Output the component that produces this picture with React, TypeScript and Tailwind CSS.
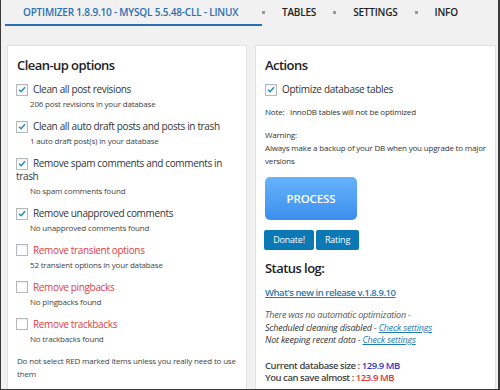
import React from "react";

function Check({ checked }: { checked: boolean }) {
  return (
    <span className="inline-flex w-3 h-3 align-[-2px] bg-white border border-[#b4b9be] shadow-[inset_0_1px_2px_rgba(0,0,0,0.08)] items-center justify-center">
      {checked && (
        <svg viewBox="0 0 12 12" className="w-[11px] h-[11px]">
          <path d="M2.4 6.2 L4.9 8.6 L9.6 3.2" fill="none" stroke="#1e8cbe" strokeWidth="1.8" />
        </svg>
      )}
    </span>
  );
}

type Opt = { label: string; sub: string; checked: boolean; red?: boolean };

const options: Opt[] = [
  { label: "Clean all post revisions", sub: "206 post revisions in your database", checked: true },
  { label: "Clean all auto draft posts and posts in trash", sub: "1 auto draft post(s) in your database", checked: true },
  { label: "Remove spam comments and comments in trash", sub: "No spam comments found", checked: true },
  { label: "Remove unapproved comments", sub: "No unapproved comments found", checked: true },
  { label: "Remove transient options", sub: "52 transient options in your database", checked: false, red: true },
  { label: "Remove pingbacks", sub: "No pingbacks found", checked: false, red: true },
  { label: "Remove trackbacks", sub: "No trackbacks found", checked: false, red: true },
];

export default function App() {
  return (
    <div
      className="w-[500px] h-[390px] overflow-hidden bg-[#f1f1f1] border-l border-b border-r-2 border-[#3a3a3a] text-[#333]"
      style={{ fontFamily: '"Open Sans", Arial, sans-serif' }}
    >
      {/* Tabs */}
      <div className="flex items-center pl-[4px] h-[26px] text-[10px] font-semibold tracking-[-0.2px]">
        <div className="w-[257px] h-full border-b-2 border-[#2a6fb5] pl-[18px] flex items-center text-[#2a6fb5] whitespace-nowrap">
          OPTIMIZER 1.8.9.10 - MYSQL 5.5.48-CLL - LINUX
        </div>
        {["TABLES", "SETTINGS", "INFO"].map((t) => (
          <div key={t} className="h-full pb-[2px] flex items-center text-[#222]">
            <span className="w-[3px] h-[3px] bg-[#9a9a9a] mr-[17px]" />
            <span className="mr-[17px]">{t}</span>
          </div>
        ))}
      </div>

      <div className="flex gap-[8px] pl-[6px] mt-[19px]">
        {/* Left panel */}
        <div className="w-[240px] h-[360px] shrink-0 bg-white border border-[#e2e2e2] pl-[9px] pr-[6px] pt-[9px]">
          <h2 className="text-[13px] font-semibold leading-[20px] tracking-[-0.55px] text-[#222]">Clean-up options</h2>
          <div className="mt-[8px] flex flex-col gap-[10px]">
            {options.map((o) => (
              <div key={o.label}>
                <div
                  className={`-ml-px text-[10px] leading-[13px] tracking-[-0.35px] ${o.red ? "text-[#e23d3d]" : "text-[#333]"}`}
                >
                  <Check checked={o.checked} />
                  <span className="ml-[5px]">{o.label}</span>
                </div>
                <div className="text-[8px] leading-[12px] tracking-[-0.18px] mt-[2px] pl-[13px] text-[#444]">{o.sub}</div>
              </div>
            ))}
          </div>
          <p className="text-[8px] leading-[12.5px] tracking-[-0.18px] mt-[10px] text-[#444]">
            Do not select RED marked items unless you really need to use them
          </p>
        </div>

        {/* Right panel */}
        <div className="w-[241px] h-[360px] shrink-0 bg-white border border-[#e2e2e2] pl-[9px] pr-[6px] pt-[9px]">
          <h2 className="text-[13px] font-semibold leading-[20px] tracking-[-0.55px] text-[#222]">Actions</h2>
          <div className="mt-[8px] text-[10px] leading-[13px] tracking-[-0.3px] text-[#333]">
            <Check checked={true} />
            <span className="ml-[5px]">Optimize database tables</span>
          </div>
          <p className="text-[8px] leading-[12px] tracking-[-0.18px] mt-[10px] text-[#333]">
            Note:&nbsp;&nbsp; InnoDB tables will not be optimized
          </p>
          <p className="text-[8px] leading-[13px] tracking-[-0.18px] mt-[10px] text-[#333]">
            Warning:
            <br />
            Always make a backup of your DB when you upgrade to major versions
          </p>
          <button className="block mt-[10px] w-[92px] h-[43px] rounded-[5px] bg-gradient-to-b from-[#66b3fa] to-[#3b8eee] text-white text-[11.5px] font-semibold tracking-[-0.1px]">
            PROCESS
          </button>
          <div className="flex gap-[2px] mt-[10px] -ml-px">
            <button className="w-[50px] h-[20px] rounded-[2px] bg-[#0d78b6] text-white text-[9px] tracking-[-0.2px]">Donate!</button>
            <button className="w-[43px] h-[20px] rounded-[2px] bg-[#0d78b6] text-white text-[9px] tracking-[-0.2px]">Rating</button>
          </div>
          <h2 className="text-[13px] font-semibold leading-[20px] tracking-[-0.55px] mt-[8px] text-[#222]">Status log:</h2>
          <a className="block mt-[8px] text-[9.5px] font-semibold underline text-[#1f7bb0] leading-[13px] tracking-[-0.45px]">
            What's new in release v.1.8.9.10
          </a>
          <div className="mt-[10px] text-[9px] leading-[12.5px] tracking-[-0.2px] italic text-[#333]">
            <div className="text-[#555]">There was no automatic optimization -</div>
            <div>
              Scheduled cleaning disabled - <span className="underline text-[#1f7bb0]">Check settings</span>
            </div>
            <div>
              Not keeping recent data - <span className="underline text-[#1f7bb0]">Check settings</span>
            </div>
          </div>
          <div className="mt-[13px] text-[9.5px] leading-[12px] font-semibold tracking-[-0.45px] text-[#444]">
            <div>
              Current database size : <span className="text-[#3434c8]">129.9 MB</span>
            </div>
            <div>
              You can save almost : <span className="text-[#e03535]">123.9 MB</span>
            </div>
          </div>
        </div>
      </div>
    </div>
  );
}
